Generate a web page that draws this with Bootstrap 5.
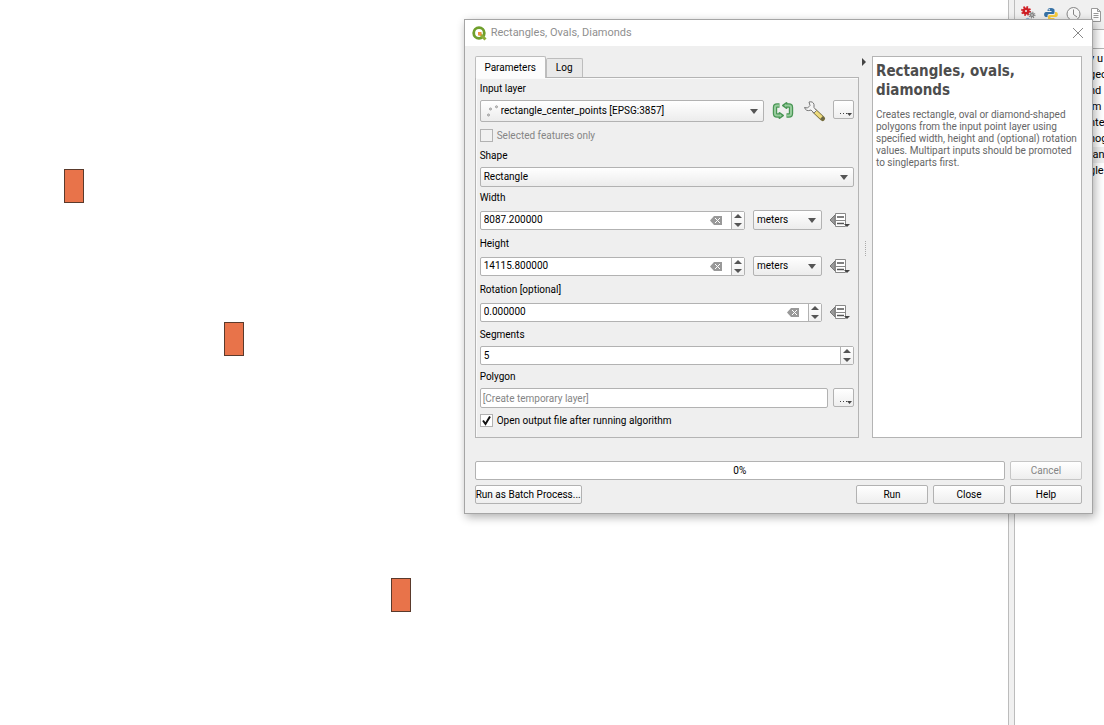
<!DOCTYPE html>
<html lang="en">
<head>
<meta charset="utf-8">
<meta name="viewport" content="width=device-width, initial-scale=1">
<title>Rectangles, Ovals, Diamonds</title>
<link href="https://cdn.jsdelivr.net/npm/bootstrap@5.3.0/dist/css/bootstrap.min.css" rel="stylesheet">
<style>
  body { font: 10px/16px Roboto, "Noto Sans", sans-serif; color: #000; background: #fff; }
  input, button, select { font: inherit; color: inherit; border-radius: 2px; }
  .map-area { min-width: 0; }
  .feature { width: 20px; height: 34px; background: #e8734a; border: 1px solid #5a3a2c; }
  .dock-split { width: 7px; background: #f0f0f0; border: solid #bcbcbc; border-width: 0 1px; }
  .dock { width: 89px; font-size: 11px; }
  .dock-tools { height: 29px; background: #f0f0f0; padding: 6px 0 0 5px; gap: 7px; }
  .tool { width: 16px; height: 16px; padding: 0; border: 0; background: none; line-height: 0; flex: none; }
  .dock-search { height: 20px; border: solid #b4b4b4; border-width: 1px 0; }
  .dock-list { padding-top: 2px; }
  .dock-list li { height: 16px; padding-left: 74px; white-space: nowrap; }
  .dock-list li.picked { background: #f0f0f0; }
  .dialog-win { left: 42%; right: 11px; top: 19px; background: #efefef; border: 1px solid #a5a5a5; box-shadow: 2px 3px 9px rgba(0,0,0,.32); }
  .title-bar { height: 26px; background: #fff; padding: 0 6px 0 7px; }
  .title-bar h1 { font: 11px/16px Roboto, sans-serif; color: #8f8f8f; }
  .dialog-main { padding: 10px 10px 0; }
  .params { min-width: 0; }
  .tab-btn { border: 1px solid #bdbdbd; border-bottom: 0; background: #e9e9e9; height: 19px; padding: 0; width: 37px; border-radius: 2px 2px 0 0; }
  .tab-btn.active { background: #fcfcfc; height: 22px; margin-bottom: -1px; width: 71px; z-index: 1; position: relative; }
  .pane { border: 1px solid #b4b4b4; padding: 3px 4px 6px 4px; height: 361px; box-shadow: inset 1px 1px #fafafa; }
  .pane label { display: block; height: 16px; }
  .g3 { margin-top: 3px; } .g4 { margin-top: 4px; } .g5 { margin-top: 5px; } .g6 { margin-top: 6px; }
  .combo { appearance: none; border: 1px solid #b2b2b2; height: 20px; padding: 0 20px 0 3px; min-width: 0;
    background: url("data:image/svg+xml,%3Csvg xmlns='http://www.w3.org/2000/svg' width='8' height='5'%3E%3Cpath d='M0 0h8L4 5z' fill='%23555'/%3E%3C/svg%3E") no-repeat right 5px center, linear-gradient(#fff, #ececec); }
  .combo.layer { height: 22px; padding-left: 20px; }
  .combo.unit { width: 69px; }
  .layer-dots { left: 6px; top: 5px; pointer-events: none; }
  .wrench { margin: 0 6px 0 9px; }
  .spin { height: 19px; border: 1px solid #b2b2b2; border-radius: 2px; background: #fff; min-width: 0; }
  .spin input { border: 0; background: none; padding: 0 3px; min-width: 0; outline: 0; }
  .clear-btn { border: 0; background: none; padding: 0; width: 12px; line-height: 0; margin-right: 9px; }
  .steps { width: 13px; border-left: 1px solid #b2b2b2; background: linear-gradient(#fff, #f0f0f0); }
  .steps button { border: 0; background: none; padding: 0; line-height: 0; height: 8px; }
  .defined { border: 0; background: none; padding: 0; width: 21px; height: 18px; line-height: 0; margin-right: 3px; }
  .row-unit { gap: 8px; height: 20px; }
  .line-in { height: 20px; border: 1px solid #b2b2b2; padding: 0 2px; min-width: 0; background: #fff; }
  .line-in::placeholder { color: #858585; opacity: 1; }
  .push { border: 1px solid #b2b2b2; background: linear-gradient(#fff, #eee); padding: 0; height: 19px; line-height: 17px; }
  .push.w { width: 72px; }
  .push.batch { width: 107px; white-space: nowrap; }
  .push:disabled { color: #858585; border-color: #c6c6c6; }
  .push.more { width: 21px; line-height: 0; flex: none; }
  .tick { appearance: none; width: 13px; height: 13px; margin: 1px 4px 0 0; border: 1px solid #b2b2b2; border-radius: 0; background: #fafafa; }
  .tick:disabled { background: #f1f1f1; }
  .tick:checked { background: #fff url("data:image/svg+xml,%3Csvg xmlns='http://www.w3.org/2000/svg' width='11' height='11'%3E%3Cpath d='M2 5.5l2.5 3.5L9 1.5' fill='none' stroke='%23111' stroke-width='2'/%3E%3C/svg%3E"); }
  .soft { color: #858585; }
  .grip { width: 13px; }
  .grip button { border: 0; background: none; padding: 0; line-height: 0; height: 9px; width: 10px; display: block; margin-top: 1px; }
  .dots { width: 1px; height: 15px; margin: 175px auto 0; border-left: 1px dotted #aaa; }
  .about { width: 210px; background: #fff; border: 1px solid #b4b4b4; padding: 5px 0 4px 3px; font: 10px/12px Roboto, "Noto Sans", sans-serif; color: #666; }
  .about h2 { font: bold 15px/19px "DejaVu Sans Condensed", "Noto Sans", sans-serif; color: #4d4d4d; margin: 0 0 9px; }
  .about p { margin: 0 -2px 0 0; }
  .dialog-foot { padding: 23px 10px 9px; }
  .foot-row { gap: 5px; }
  .foot-row + .foot-row { margin-top: 5px; }
  .meter { height: 19px; border: 1px solid #b2b2b2; border-radius: 2px; background: #fff; line-height: 17px; }
</style>
</head>
<body>
<div class="d-flex vh-100 overflow-hidden position-relative">
  <main class="map-area flex-grow-1 position-relative" aria-label="Map canvas">
    <div class="feature position-absolute" style="left:64px;top:169px"></div>
    <div class="feature position-absolute" style="left:224px;top:322px"></div>
    <div class="feature position-absolute" style="left:391px;top:578px"></div>
  </main>
  <div class="dock-split flex-shrink-0"></div>
  <aside class="dock flex-shrink-0 overflow-hidden">
    <div class="dock-tools d-flex">
      <button class="tool" aria-label="Models"><svg width="16" height="16"><g fill="none"><circle cx="6" cy="5" r="2.300" stroke="#cf1f25" stroke-width="2.600"/><circle cx="6" cy="5" r="4" stroke="#cf1f25" stroke-width="2" stroke-dasharray="1.600 1.540"/><circle cx="12" cy="9" r="1.500" stroke="#8a8a8a" stroke-width="1.600"/><circle cx="12" cy="9" r="2.800" stroke="#8a8a8a" stroke-width="1.400" stroke-dasharray="1.100 1.100"/></g><path d="M5 14q2-4 5-1z" fill="#8fb0d8"/></svg></button>
      <button class="tool" aria-label="Scripts"><svg width="16" height="16"><path d="M8 2c-3 0-3.500 1-3.500 3h4v1H3C.5 6 .5 11 3 11h1.500V9.500Q4.500 8 6 8h4Q11.500 8 11.500 6.500V4C11.500 3 10.500 2 8 2z" fill="#3671a5"/><path d="M8 15c3 0 3.500-1 3.500-3h-4v-1H13c2.500 0 2.500-5 0-5h-1v1.500q0 1.500-1.500 1.500h-4Q5 9 5 10.500v2C5 14 6 15 8 15z" fill="#f8cb3d"/><circle cx="6.200" cy="3.700" r=".7" fill="#fff"/></svg></button>
      <button class="tool" aria-label="History"><svg width="16" height="16" fill="none" stroke="#858585"><circle cx="7.500" cy="8" r="6.500" fill="#f7f7f7"/><path d="M7.500 3.500v5l3.500 2.500"/></svg></button>
      <button class="tool" aria-label="Results"><svg width="16" height="16" fill="#fff" stroke="#999"><path d="M2.500 2.500h6l3 3v10h-9zM8.500 2.500v3h3M4.500 7.500h5M4.500 9.500h5M4.500 11.500h5"/></svg></button>
    </div>
    <div class="dock-search"></div>
    <ul class="dock-list list-unstyled m-0">
      <li>y u</li><li>geo</li><li>nd</li><li>im</li><li>nte</li><li>nog</li><li class="picked">tan</li><li>gle</li>
    </ul>
  </aside>

  <section class="dialog-win position-absolute" role="dialog" aria-labelledby="dlgTitle">
    <header class="title-bar d-flex align-items-center">
      <svg width="15" height="15" viewBox="0 0 15 15"><circle cx="7" cy="7" r="5.300" fill="none" stroke="#6f9f2c" stroke-width="2.800"/><path d="M8 8l5.500 5.500" stroke="#8fae3a" stroke-width="3"/><path d="M6 6h4L8.800 7.300 10 8.500 8.500 10 7.300 8.800 6 10z" fill="#ee913f"/></svg>
      <h1 class="m-0 ms-1 flex-grow-1" id="dlgTitle">Rectangles, Ovals, Diamonds</h1>
      <button class="tool" aria-label="Close window"><svg width="14" height="14" stroke="#888" fill="none"><path d="M2 2l10 10M12 2L2 12"/></svg></button>
    </header>

    <div class="dialog-main d-flex">
      <form class="params flex-grow-1">
        <div class="d-flex align-items-end" role="tablist">
          <button type="button" class="tab-btn active" role="tab" aria-selected="true">Parameters</button>
          <button type="button" class="tab-btn" role="tab">Log</button>
        </div>
        <div class="pane">
          <label for="layer">Input layer</label>
          <div class="d-flex g3 align-items-center">
            <div class="position-relative flex-grow-1 d-flex">
              <svg class="layer-dots position-absolute" width="14" height="13" fill="#ddd" stroke="#999"><circle cx="2.500" cy="10" r="1"/><circle cx="4.500" cy="4" r="1"/><circle cx="10.500" cy="1.800" r="1"/></svg>
              <select class="combo layer w-100" id="layer"><option>rectangle_center_points [EPSG:3857]</option></select>
            </div>
            <button type="button" class="tool ms-2 w-auto h-auto" aria-label="Iterate over layer"><svg width="22" height="20" viewBox="0 0 22 20"><g fill="none" stroke-linejoin="round"><path d="M7.500 14.500H5Q3 14.500 3 12.500v-6Q3 4.500 5 4.500h2.500M14.500 4.500H17Q19 4.500 19 6.500v6Q19 14.500 17 14.500h-2.500" stroke="#4a9655" stroke-width="4.400"/><path d="M7.500 12v5l3.500-2.500zM14.500 2v5l-3.500-2.500z" fill="#4a9655" stroke="#4a9655" stroke-width="2"/><path d="M8.500 14.500H5Q3 14.500 3 12.500v-6Q3 4.500 5 4.500h2.500M13.500 4.500H17Q19 4.500 19 6.500v6Q19 14.500 17 14.500h-2.500" stroke="#96cc9c" stroke-width="2"/><path d="M8 13v3l2-1.500zM14 3v3l-2-1.500z" fill="#96cc9c"/></g></svg></button>
            <button type="button" class="tool wrench w-auto h-auto" aria-label="Advanced options"><svg width="24" height="22" viewBox="0 0 24 22"><path d="M12 11.500l7.500 7" stroke="#746c3c" stroke-width="5" stroke-linecap="round"/><path d="M12 11.500l6.500 6" stroke="#eedb7e" stroke-width="3.400"/><path d="M1.500 7.500l3 .5 2.500-2.500-1-3.500q4-1 5 2.500v3l2.500 3-2.500 2.500-3-3Q3 12 1.500 7.500z" fill="#f4f4f4" stroke="#777"/><circle cx="19.500" cy="18.500" r="1" fill="#665"/></svg></button>
            <button type="button" class="push more align-self-start" aria-label="Browse layer"><svg width="19" height="17"><path d="M6 12.500h8" stroke="#444" stroke-dasharray="1 2"/><path d="M13 12h5l-2.500 3z" fill="#444"/></svg></button>
          </div>
          <div class="d-flex g6"><input type="checkbox" class="tick" id="sel" disabled><label class="soft" for="sel">Selected features only</label></div>

          <label class="g4" for="shape">Shape</label>
          <select class="combo w-100 g3 d-block" id="shape"><option>Rectangle</option></select>

          <label class="g3" for="wd">Width</label>
          <div class="d-flex row-unit align-items-center g4">
            <div class="spin d-flex flex-grow-1"><input class="flex-grow-1" id="wd" value="8087.200000"><button type="button" class="clear-btn" aria-label="Clear width"><svg width="12" height="9"><path d="M0 4.500L4 0h8v9H4z" fill="#999"/><path d="M5 2l5 5M10 2L5 7" stroke="#fff"/></svg></button><span class="steps d-flex flex-column"><button type="button" aria-label="Increase"><svg width="8" height="8"><path d="M0 6h8L4 2z" fill="#555"/></svg></button><button type="button" aria-label="Decrease"><svg width="8" height="8"><path d="M0 3h8L4 7z" fill="#555"/></svg></button></span></div>
            <select class="combo unit" aria-label="Width units"><option>meters</option></select>
            <button type="button" class="defined" aria-label="Data-defined width"><svg width="21" height="17"><path d="M0 8l5-5v10z" fill="#999" stroke="#777"/><path d="M5.500 1.500h10v13h-10zM5.500 8.500h10" fill="#fff" stroke="#888"/><path d="M7 5h7M7 11.500h7" stroke="#555" stroke-width="1.500"/><path d="M14 12h6l-3 3z" fill="#444"/></svg></button>
          </div>

          <label class="g6" for="ht">Height</label>
          <div class="d-flex row-unit align-items-center g4">
            <div class="spin d-flex flex-grow-1"><input class="flex-grow-1" id="ht" value="14115.800000"><button type="button" class="clear-btn" aria-label="Clear height"><svg width="12" height="9"><path d="M0 4.500L4 0h8v9H4z" fill="#999"/><path d="M5 2l5 5M10 2L5 7" stroke="#fff"/></svg></button><span class="steps d-flex flex-column"><button type="button" aria-label="Increase"><svg width="8" height="8"><path d="M0 6h8L4 2z" fill="#555"/></svg></button><button type="button" aria-label="Decrease"><svg width="8" height="8"><path d="M0 3h8L4 7z" fill="#555"/></svg></button></span></div>
            <select class="combo unit" aria-label="Height units"><option>meters</option></select>
            <button type="button" class="defined" aria-label="Data-defined height"><svg width="21" height="17"><path d="M0 8l5-5v10z" fill="#999" stroke="#777"/><path d="M5.500 1.500h10v13h-10zM5.500 8.500h10" fill="#fff" stroke="#888"/><path d="M7 5h7M7 11.500h7" stroke="#555" stroke-width="1.500"/><path d="M14 12h6l-3 3z" fill="#444"/></svg></button>
          </div>

          <label class="g6" for="rot">Rotation [optional]</label>
          <div class="d-flex row-unit align-items-center g4">
            <div class="spin d-flex flex-grow-1"><input class="flex-grow-1" id="rot" value="0.000000"><button type="button" class="clear-btn" aria-label="Clear rotation"><svg width="12" height="9"><path d="M0 4.500L4 0h8v9H4z" fill="#999"/><path d="M5 2l5 5M10 2L5 7" stroke="#fff"/></svg></button><span class="steps d-flex flex-column"><button type="button" aria-label="Increase"><svg width="8" height="8"><path d="M0 6h8L4 2z" fill="#555"/></svg></button><button type="button" aria-label="Decrease"><svg width="8" height="8"><path d="M0 3h8L4 7z" fill="#555"/></svg></button></span></div>
            <button type="button" class="defined" aria-label="Data-defined rotation"><svg width="21" height="17"><path d="M0 8l5-5v10z" fill="#999" stroke="#777"/><path d="M5.500 1.500h10v13h-10zM5.500 8.500h10" fill="#fff" stroke="#888"/><path d="M7 5h7M7 11.500h7" stroke="#555" stroke-width="1.500"/><path d="M14 12h6l-3 3z" fill="#444"/></svg></button>
          </div>

          <label class="g5" for="seg">Segments</label>
          <div class="spin d-flex g3"><input class="flex-grow-1" id="seg" value="5"><span class="steps d-flex flex-column"><button type="button" aria-label="Increase"><svg width="8" height="8"><path d="M0 6h8L4 2z" fill="#555"/></svg></button><button type="button" aria-label="Decrease"><svg width="8" height="8"><path d="M0 3h8L4 7z" fill="#555"/></svg></button></span></div>

          <label class="g4" for="poly">Polygon</label>
          <div class="d-flex foot-row g3"><input class="line-in flex-grow-1" id="poly" placeholder="[Create temporary layer]"><button type="button" class="push more" aria-label="Choose output"><svg width="19" height="17"><path d="M6 12.500h8" stroke="#444" stroke-dasharray="1 2"/><path d="M13 12h5l-2.500 3z" fill="#444"/></svg></button></div>
          <div class="d-flex g5"><input type="checkbox" class="tick" id="open" checked><label for="open">Open output file after running algorithm</label></div>
        </div>
      </form>
      <div class="grip flex-shrink-0"><button aria-label="Collapse help"><svg width="10" height="9"><path d="M3 1l4 4-4 4z" fill="#444"/></svg></button><div class="dots"></div></div>
      <article class="about flex-shrink-0">
        <h2>Rectangles, ovals, diamonds</h2>
        <p>Creates rectangle, oval or diamond-shaped polygons from the input point layer using specified width, height and (optional) rotation values. Multipart inputs should be promoted to singleparts first.</p>
      </article>
    </div>

    <footer class="dialog-foot">
      <div class="d-flex foot-row">
        <div class="meter flex-grow-1 text-center" role="progressbar" aria-label="Progress" aria-valuenow="0" aria-valuemin="0" aria-valuemax="100">0%</div>
        <button class="push w" disabled>Cancel</button>
      </div>
      <div class="d-flex foot-row">
        <button class="push batch me-auto">Run as Batch Process...</button>
        <button class="push w">Run</button>
        <button class="push w">Close</button>
        <button class="push w">Help</button>
      </div>
    </footer>
  </section>
</div>
<script src="https://cdn.jsdelivr.net/npm/bootstrap@5.3.0/dist/js/bootstrap.bundle.min.js"></script>
</body>
</html>
